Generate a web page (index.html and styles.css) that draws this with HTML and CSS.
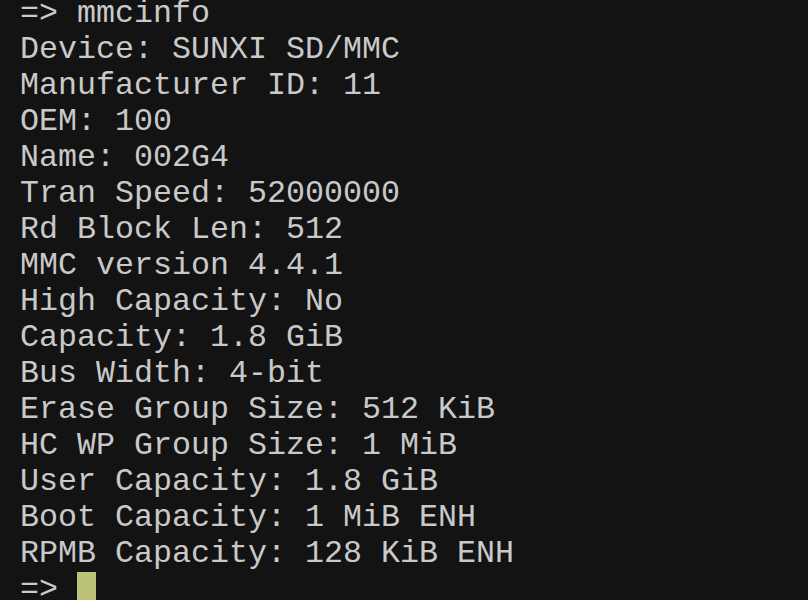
FILE: index.html
```html
<!DOCTYPE html>
<html>
<head>
<meta charset="utf-8">
<link rel="stylesheet" href="styles.css">
</head>
<body>
<div class="term">
<div class="line">=&gt; mmcinfo</div>
<div class="line">Device: SUNXI SD/MMC</div>
<div class="line">Manufacturer ID: 11</div>
<div class="line">OEM: 100</div>
<div class="line">Name: 002G4</div>
<div class="line">Tran Speed: 52000000</div>
<div class="line">Rd Block Len: 512</div>
<div class="line">MMC version 4.4.1</div>
<div class="line">High Capacity: No</div>
<div class="line">Capacity: 1.8 GiB</div>
<div class="line">Bus Width: 4-bit</div>
<div class="line">Erase Group Size: 512 KiB</div>
<div class="line">HC WP Group Size: 1 MiB</div>
<div class="line">User Capacity: 1.8 GiB</div>
<div class="line">Boot Capacity: 1 MiB ENH</div>
<div class="line">RPMB Capacity: 128 KiB ENH</div>
<div class="line">=&gt; <span class="cursor"> </span></div>
</div>
</body>
</html>
```
FILE: styles.css
```css
html, body {
  margin: 0;
  padding: 0;
  background: #131313;
  width: 808px;
  height: 600px;
  overflow: hidden;
}
.term {
  margin: -4px 0 0 0;
  padding: 0 0 0 20px;
  font-family: "Courier", "Nimbus Mono PS", "Nimbus Mono L", "FreeMono", "Liberation Mono", monospace;
  font-size: 31.67px;
  line-height: 36px;
  color: #c9c9c9;
}
.line {
  height: 36px;
  white-space: pre;
}
.cursor {
  display: inline-block;
  width: 19px;
  height: 36px;
  vertical-align: top;
  background: #bcc27a;
}
```
